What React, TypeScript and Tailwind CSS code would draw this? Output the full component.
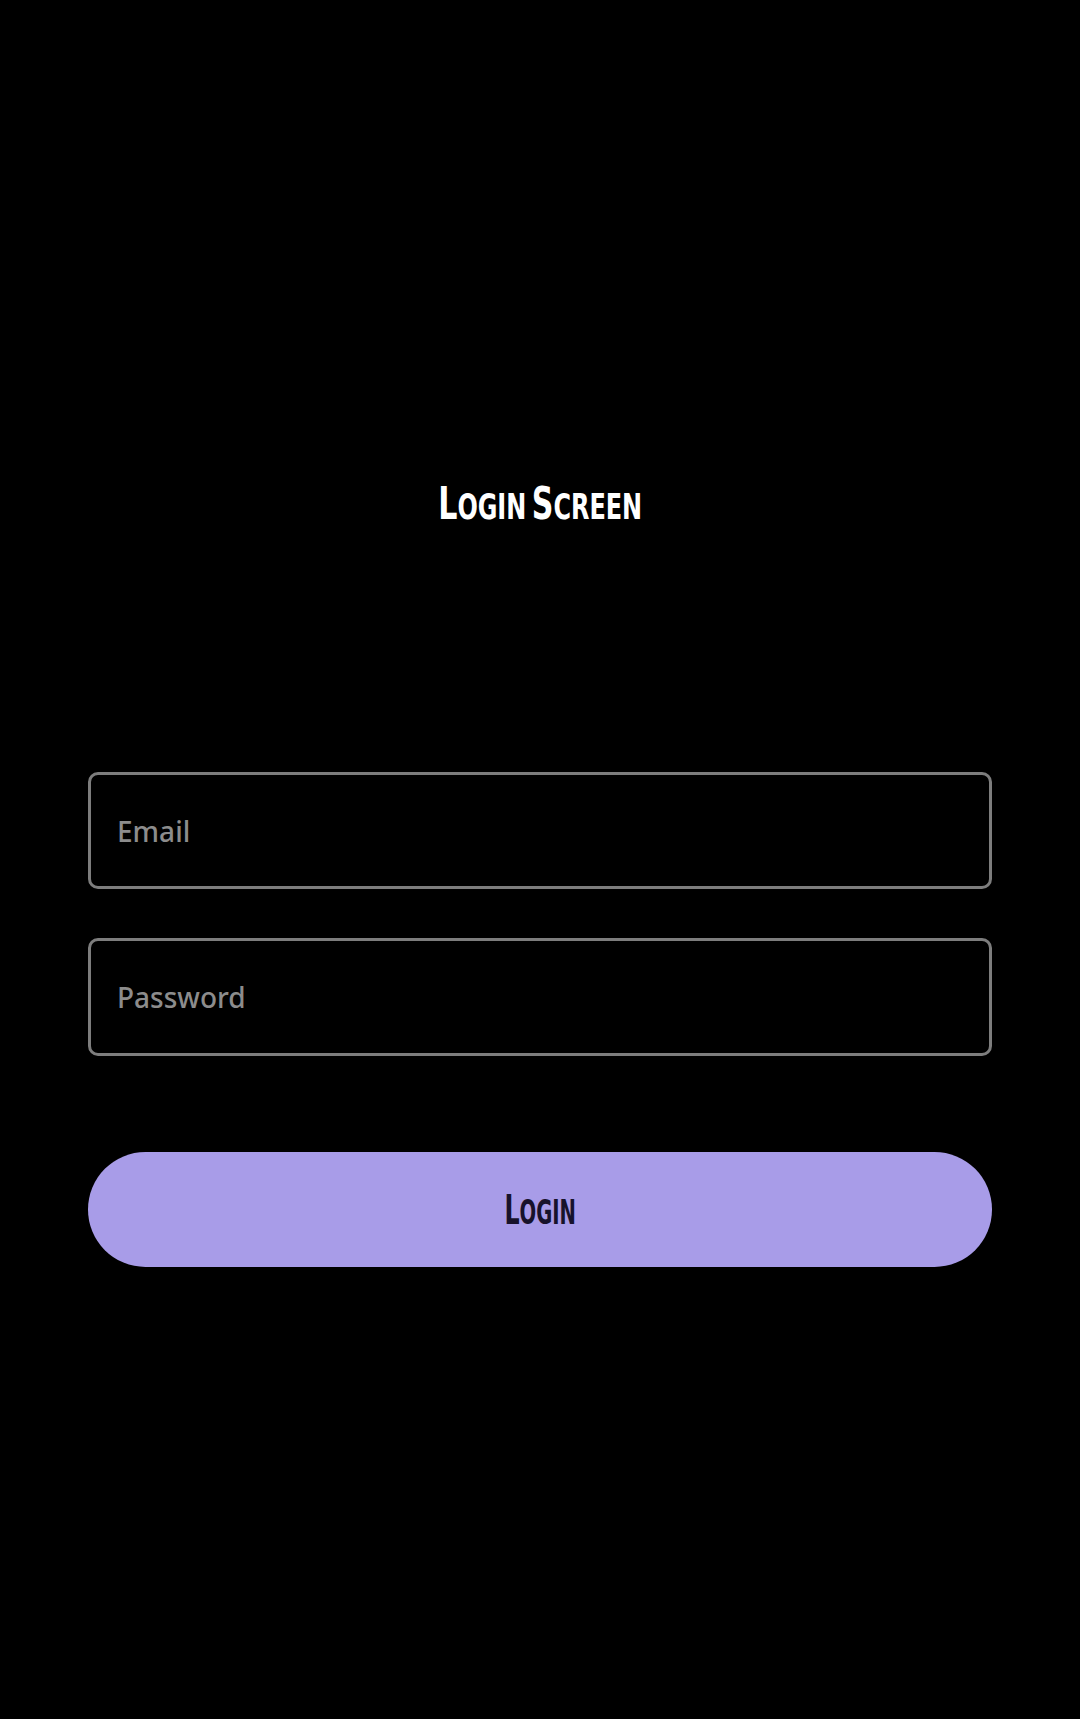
import { useState } from 'react'

const display = "font-['DejaVu_Sans_Condensed',sans-serif] font-bold"

function SmallCaps({ text, big, small }: { text: string; big: string; small: string }) {
  // first letter of each word full size, the rest as small caps
  return (
    <>
      {text.split(' ').map((word, i) => (
        <span key={i} className={i > 0 ? 'ml-[0.45em]' : ''}>
          <span className={big}>{word[0]}</span>
          <span className={small}>{word.slice(1).toUpperCase()}</span>
        </span>
      ))}
    </>
  )
}

export default function App() {
  const [email, setEmail] = useState('')
  const [password, setPassword] = useState('')

  return (
    <div className="min-h-screen w-full bg-black flex flex-col items-stretch px-[88px]">
      {/* Title */}
      <h1 className={`${display} text-white text-center mt-[476px] leading-[56px]`}>
        <span className="inline-block scale-x-[0.76]">
          <SmallCaps text="Login Screen" big="text-[44px]" small="text-[35px]" />
        </span>
      </h1>

      {/* Form */}
      <div className="mt-[230px] flex flex-col">
        <input
          value={email}
          onChange={(e) => setEmail(e.target.value)}
          placeholder="Email"
          className="h-[117px] w-full rounded-[10px] border-[3px] border-[#7d7d7d] bg-black px-[26px] text-[28px] font-medium text-white placeholder:text-[#8c8c8c] outline-none font-['Noto_Sans',sans-serif]"
        />
        <input
          type="password"
          value={password}
          onChange={(e) => setPassword(e.target.value)}
          placeholder="Password"
          className="mt-[49px] h-[118px] w-full rounded-[10px] border-[3px] border-[#7d7d7d] bg-black px-[26px] text-[28px] font-medium text-white placeholder:text-[#8c8c8c] outline-none font-['Noto_Sans',sans-serif]"
        />

        <button
          className={`${display} mt-[96px] h-[115px] w-full rounded-full bg-[#a89ce8] text-[#17122b]`}
        >
          <span className="inline-block scale-x-[0.66]">
            <SmallCaps text="Login" big="text-[40px]" small="text-[33px]" />
          </span>
        </button>
      </div>
    </div>
  )
}
